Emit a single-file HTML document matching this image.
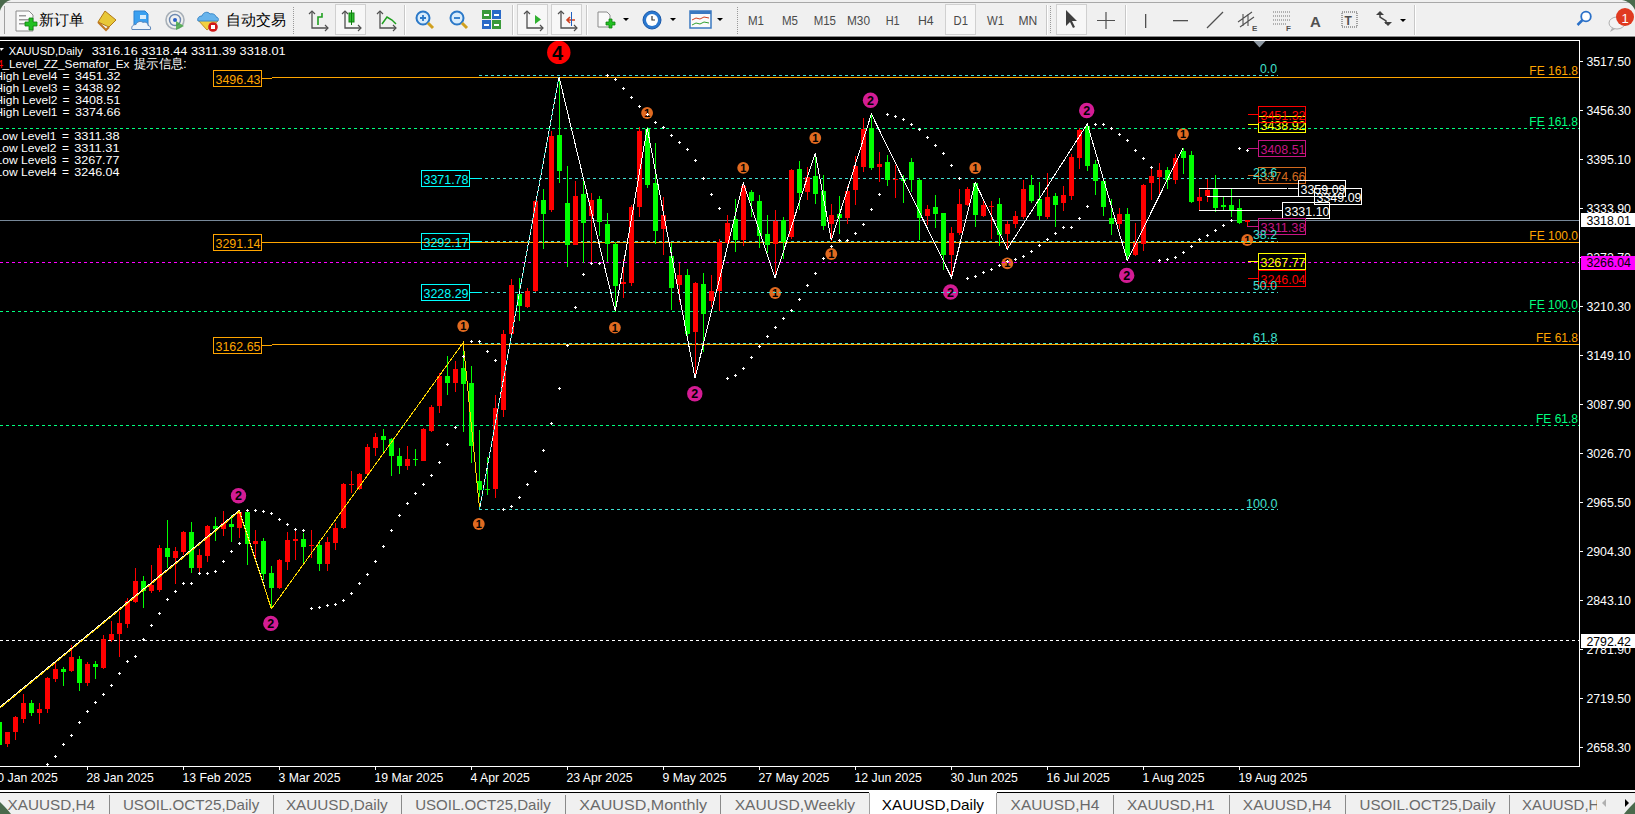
<!DOCTYPE html>
<html><head><meta charset="utf-8">
<style>
html,body{margin:0;padding:0;background:#000;}
body{width:1635px;height:814px;overflow:hidden;position:relative;font-family:"Liberation Sans",sans-serif;}
svg{position:absolute;left:0;top:0;}
text{font-family:"Liberation Sans",sans-serif;}
</style></head><body>
<svg width="1635" height="814" viewBox="0 0 1635 814">
<defs>
<pattern id="grip" width="3" height="2" patternUnits="userSpaceOnUse"><rect width="1" height="1" fill="#9a9a9a"/><rect x="2" y="1" width="1" height="1" fill="#9a9a9a"/></pattern>
</defs>
<rect x="0" y="0" width="1635" height="814" fill="#000"/>
<rect x="0" y="0" width="1635" height="36" fill="#f0f0f0"/>
<rect x="0" y="2" width="1635" height="1" fill="#a8a8a8"/>
<rect x="0" y="35" width="1635" height="1" fill="#f6f6f6"/>
<rect x="0" y="36" width="1635" height="1" fill="#8c8c8c"/>
<path d="M0 0h11c-5 1-9 5-11 11z" fill="#4a6a4c"/>
<path d="M1635 0h-13c6 1 11 5 13 10z" fill="#4a6a4c"/>
<rect x="4" y="6" width="1" height="28" fill="#a0a0a0"/>
<path d="M16 11h13l4 4v16h-17z" fill="#fafafa" stroke="#8a8a8a"/>
<rect x="19" y="15" width="7" height="1.5" fill="#999"/><rect x="19" y="19" width="10" height="1.5" fill="#999"/><rect x="19" y="23" width="10" height="1.5" fill="#999"/>
<path d="M25 22h4v-4h4v4h4v4h-4v4h-4v-4h-4z" fill="#22c022" stroke="#108010" stroke-width="0.8"/>
<text x="39" y="24.6" font-size="15.3" fill="#000">新订单</text>
<path d="M98 22l7-11 11 9-7 7z" fill="#e8c838" stroke="#b07818"/><path d="M98 22l8 8 3-3" fill="none" stroke="#c07820" stroke-width="2"/>
<path d="M134 11h11l3 3v12h-14z" fill="#3aa0f0" stroke="#2a80d0"/><rect x="140" y="15" width="6" height="4" fill="#d8ecfb"/><path d="M132 29.5c-1-3 1-5 4-5c1-3 5-4 7-2c2-1 5 0 5 3c2 0 3 2 2.5 4z" fill="#eef4fa" stroke="#5a84b8"/>
<circle cx="175" cy="20" r="9" fill="none" stroke="#a8b0b8" stroke-width="1.6"/><circle cx="175" cy="20" r="5.5" fill="none" stroke="#6c88b0" stroke-width="1.4"/><circle cx="175" cy="20" r="2" fill="#2a60c8"/><path d="M176 21l0 9l8-4z" fill="#48a848" opacity="0.85"/>
<path d="M198 20l9 10 11-9z" fill="#f2d040" stroke="#c09020"/><path d="M198 21c-1-3 1-5 4-5c1-4 6-5 8-2c3-1 6 1 6 3c2 0 3 2 2 4z" fill="#68b4ec" stroke="#3a88c8"/><circle cx="213" cy="27" r="4.8" fill="#d01818"/><rect x="211" y="25" width="4" height="4" fill="#fff"/>
<text x="225.5" y="24.6" font-size="15.3" fill="#000">自动交易</text>
<rect x="292" y="6" width="2" height="28" fill="url(#grip)"/>
<path d="M312 11v17h16" fill="none" stroke="#505050" stroke-width="1.3"/><path d="M309 14l3-3 3 3M325 25l3 3-3 3" fill="none" stroke="#505050" stroke-width="1.2"/>
<path d="M318 25v-8h4v-4" fill="none" stroke="#20a020" stroke-width="1.6"/>
<rect x="335.5" y="4.5" width="30" height="30" fill="#f7f7f7" stroke="#d0d0d0"/>
<path d="M345 11v17h16" fill="none" stroke="#505050" stroke-width="1.3"/><path d="M342 14l3-3 3 3M358 25l3 3-3 3" fill="none" stroke="#505050" stroke-width="1.2"/>
<rect x="349" y="13" width="5" height="9" fill="#30c030" stroke="#108010"/><rect x="351" y="10" width="1" height="15" fill="#108010"/>
<path d="M380 11v17h16" fill="none" stroke="#505050" stroke-width="1.3"/><path d="M377 14l3-3 3 3M393 25l3 3-3 3" fill="none" stroke="#505050" stroke-width="1.2"/>
<path d="M382 24l5-7 5 3 4 4" fill="none" stroke="#20a020" stroke-width="1.5"/>
<rect x="404" y="5" width="1" height="30" fill="#c8c8c8"/><rect x="405" y="5" width="1" height="30" fill="#ffffff"/>
<circle cx="423" cy="18" r="6.5" fill="#d8ecfc" stroke="#2a78c8" stroke-width="2"/><path d="M428 23l5 5" stroke="#d0a020" stroke-width="3"/><path d="M420 18h6M423 15v6" stroke="#2a78c8" stroke-width="1.8"/>
<circle cx="457" cy="18" r="6.5" fill="#d8ecfc" stroke="#2a78c8" stroke-width="2"/><path d="M462 23l5 5" stroke="#d0a020" stroke-width="3"/><path d="M454 18h6" stroke="#2a78c8" stroke-width="1.8"/>
<rect x="482" y="10" width="9" height="9" fill="#3a9a3a"/><rect x="492" y="10" width="9" height="9" fill="#2a6ac8"/><rect x="482" y="20" width="9" height="9" fill="#2a6ac8"/><rect x="492" y="20" width="9" height="9" fill="#3a9a3a"/>
<rect x="484" y="14" width="5" height="2" fill="#fff"/><rect x="494" y="14" width="5" height="2" fill="#fff"/><rect x="484" y="24" width="5" height="2" fill="#fff"/><rect x="494" y="24" width="5" height="2" fill="#fff"/>
<rect x="512" y="5" width="1" height="30" fill="#c8c8c8"/><rect x="513" y="5" width="1" height="30" fill="#ffffff"/>
<rect x="517.5" y="4.5" width="30" height="30" fill="#f7f7f7" stroke="#d0d0d0"/>
<path d="M527 11v17h16" fill="none" stroke="#505050" stroke-width="1.3"/><path d="M524 14l3-3 3 3M540 25l3 3-3 3" fill="none" stroke="#505050" stroke-width="1.2"/>
<path d="M535 15v9l6-4.5z" fill="#30b030"/>
<rect x="551.5" y="4.5" width="30" height="30" fill="#f7f7f7" stroke="#d0d0d0"/>
<path d="M561 11v17h16" fill="none" stroke="#505050" stroke-width="1.3"/><path d="M558 14l3-3 3 3M574 25l3 3-3 3" fill="none" stroke="#505050" stroke-width="1.2"/>
<path d="M567 20h8M570 17l-3 3 3 3" fill="none" stroke="#d04020" stroke-width="1.6"/><rect x="571" y="12" width="1" height="14" fill="#2060c0"/>
<rect x="586" y="5" width="1" height="30" fill="#c8c8c8"/><rect x="587" y="5" width="1" height="30" fill="#ffffff"/>
<path d="M598 12h9l3 3v12h-12z" fill="#fafafa" stroke="#8a8a8a"/><path d="M606 22h3v-3h3v3h3v3h-3v3h-3v-3h-3z" fill="#22c022" stroke="#108010" stroke-width="0.8"/>
<path d="M623 18h6l-3 3z" fill="#000"/>
<circle cx="652" cy="20" r="9" fill="#2a78d0" stroke="#1a58a8"/><circle cx="652" cy="20" r="6" fill="#fff"/><path d="M652 16v4h3" fill="none" stroke="#333" stroke-width="1.2"/>
<path d="M670 18h6l-3 3z" fill="#000"/>
<rect x="690" y="11" width="21" height="17" fill="#fafafa" stroke="#3a78c0" stroke-width="1.5"/><rect x="690" y="11" width="21" height="3" fill="#3a78c0"/><path d="M692 20l4-2 4 1 4-2 5 1" fill="none" stroke="#d04020"/><path d="M692 25l4-2 4 1 4-2 5 1" fill="none" stroke="#30a030"/>
<path d="M717 18h6l-3 3z" fill="#000"/>
<rect x="736" y="6" width="2" height="28" fill="url(#grip)"/>
<rect x="945.5" y="4.5" width="30" height="30" fill="#f7f7f7" stroke="#d0d0d0"/>
<text x="748" y="25.3" font-size="12" fill="#4a4a4a" textLength="16" lengthAdjust="spacingAndGlyphs">M1</text>
<text x="782" y="25.3" font-size="12" fill="#4a4a4a" textLength="16" lengthAdjust="spacingAndGlyphs">M5</text>
<text x="813.7" y="25.3" font-size="12" fill="#4a4a4a" textLength="22.3" lengthAdjust="spacingAndGlyphs">M15</text>
<text x="847" y="25.3" font-size="12" fill="#4a4a4a" textLength="23" lengthAdjust="spacingAndGlyphs">M30</text>
<text x="885.7" y="25.3" font-size="12" fill="#4a4a4a" textLength="14" lengthAdjust="spacingAndGlyphs">H1</text>
<text x="918" y="25.3" font-size="12" fill="#4a4a4a" textLength="15.7" lengthAdjust="spacingAndGlyphs">H4</text>
<text x="953.6" y="25.3" font-size="12" fill="#4a4a4a" textLength="14.4" lengthAdjust="spacingAndGlyphs">D1</text>
<text x="987" y="25.3" font-size="12" fill="#4a4a4a" textLength="17" lengthAdjust="spacingAndGlyphs">W1</text>
<text x="1018.5" y="25.3" font-size="12" fill="#4a4a4a" textLength="18.8" lengthAdjust="spacingAndGlyphs">MN</text>
<rect x="1046" y="5" width="1" height="30" fill="#c8c8c8"/><rect x="1047" y="5" width="1" height="30" fill="#ffffff"/>
<rect x="1050" y="6" width="2" height="28" fill="url(#grip)"/>
<rect x="1056.5" y="4.5" width="30" height="30" fill="#f7f7f7" stroke="#d0d0d0"/>
<path d="M1066 10v16l4-4 3 6 2-1-3-6h5z" fill="#404040"/>
<path d="M1097 20.5h18M1106 12v17" stroke="#505050" stroke-width="1.2"/>
<rect x="1125" y="5" width="1" height="30" fill="#c8c8c8"/><rect x="1126" y="5" width="1" height="30" fill="#ffffff"/>
<rect x="1145" y="14" width="1.3" height="14" fill="#505050"/>
<rect x="1173" y="20" width="15" height="1.3" fill="#505050"/>
<path d="M1207 28l16-16" stroke="#505050" stroke-width="1.3"/>
<path d="M1238 22l14-10M1240 27l14-10M1243 14v12M1248 14v12" stroke="#505050" stroke-width="1.1"/><text x="1252" y="31" font-size="8" font-weight="bold" fill="#505050">E</text>
<path d="M1273 12h18M1273 16h18M1273 20h18M1273 24h14" stroke="#707070" stroke-width="1" stroke-dasharray="1 1"/><text x="1286" y="31" font-size="8" font-weight="bold" fill="#505050">F</text>
<text x="1310" y="27" font-size="15" font-weight="bold" fill="#505050">A</text>
<rect x="1342" y="12" width="15" height="15" fill="none" stroke="#505050" stroke-dasharray="1 1"/><text x="1344.5" y="25" font-size="12" font-weight="bold" fill="#505050">T</text>
<path d="M1376 15l4-4 4 4zM1384 22l4 4 4-4z" fill="#404040"/><path d="M1380 13v4l6 4v3" stroke="#404040" stroke-width="1.5" fill="none"/>
<path d="M1400 19h6l-3 3z" fill="#000"/>
<rect x="1414" y="5" width="1" height="30" fill="#c8c8c8"/><rect x="1415" y="5" width="1" height="30" fill="#ffffff"/>
<circle cx="1586" cy="16.5" r="4.8" fill="#ffffff" stroke="#2a70c8" stroke-width="1.8"/><path d="M1582.5 20l-5 5" stroke="#2a70c8" stroke-width="2.5"/>
<ellipse cx="1617" cy="23" rx="8" ry="6" fill="#f4f4f4" stroke="#b0b0b0"/><path d="M1612 28l-2 4 5-3z" fill="#b0b0b0"/>
<circle cx="1625" cy="17" r="9" fill="#e03a20"/><text x="1625" y="22.5" font-size="13" fill="#fff" text-anchor="middle">1</text>
<g shape-rendering="crispEdges">
</g>
<circle cx="463.2" cy="326" r="5.9" fill="#e06a20"/>
<text x="463.2" y="330" font-size="11" font-weight="bold" text-anchor="middle" fill="#000">1</text>
<circle cx="478.8" cy="524" r="5.9" fill="#e06a20"/>
<text x="478.8" y="528" font-size="11" font-weight="bold" text-anchor="middle" fill="#000">1</text>
<circle cx="647.1" cy="113" r="5.9" fill="#e06a20"/>
<text x="647.1" y="117" font-size="11" font-weight="bold" text-anchor="middle" fill="#000">1</text>
<circle cx="614.9" cy="327.6" r="5.9" fill="#e06a20"/>
<text x="614.9" y="331.6" font-size="11" font-weight="bold" text-anchor="middle" fill="#000">1</text>
<circle cx="743.2" cy="167.8" r="5.9" fill="#e06a20"/>
<text x="743.2" y="171.8" font-size="11" font-weight="bold" text-anchor="middle" fill="#000">1</text>
<circle cx="775.1" cy="293" r="5.9" fill="#e06a20"/>
<text x="775.1" y="297" font-size="11" font-weight="bold" text-anchor="middle" fill="#000">1</text>
<circle cx="815.3" cy="138" r="5.9" fill="#e06a20"/>
<text x="815.3" y="142" font-size="11" font-weight="bold" text-anchor="middle" fill="#000">1</text>
<circle cx="831.3" cy="254" r="5.9" fill="#e06a20"/>
<text x="831.3" y="258" font-size="11" font-weight="bold" text-anchor="middle" fill="#000">1</text>
<circle cx="975.3" cy="168" r="5.9" fill="#e06a20"/>
<text x="975.3" y="172" font-size="11" font-weight="bold" text-anchor="middle" fill="#000">1</text>
<circle cx="1007.3" cy="263.3" r="5.9" fill="#e06a20"/>
<text x="1007.3" y="267.3" font-size="11" font-weight="bold" text-anchor="middle" fill="#000">1</text>
<circle cx="1183" cy="134" r="5.9" fill="#e06a20"/>
<text x="1183" y="138" font-size="11" font-weight="bold" text-anchor="middle" fill="#000">1</text>
<circle cx="1247.2" cy="240" r="5.9" fill="#e06a20"/>
<text x="1247.2" y="244" font-size="11" font-weight="bold" text-anchor="middle" fill="#000">1</text>
<circle cx="238.5" cy="495.7" r="7.7" fill="#d41c94"/>
<text x="238.5" y="500.2" font-size="12.5" font-weight="bold" text-anchor="middle" fill="#000">2</text>
<circle cx="270.8" cy="623.4" r="7.7" fill="#d41c94"/>
<text x="270.8" y="627.9" font-size="12.5" font-weight="bold" text-anchor="middle" fill="#000">2</text>
<circle cx="694.8" cy="393.7" r="7.7" fill="#d41c94"/>
<text x="694.8" y="398.2" font-size="12.5" font-weight="bold" text-anchor="middle" fill="#000">2</text>
<circle cx="870.5" cy="100.3" r="7.7" fill="#d41c94"/>
<text x="870.5" y="104.8" font-size="12.5" font-weight="bold" text-anchor="middle" fill="#000">2</text>
<circle cx="950.6" cy="292" r="7.7" fill="#d41c94"/>
<text x="950.6" y="296.5" font-size="12.5" font-weight="bold" text-anchor="middle" fill="#000">2</text>
<circle cx="1086.7" cy="110.5" r="7.7" fill="#d41c94"/>
<text x="1086.7" y="115.0" font-size="12.5" font-weight="bold" text-anchor="middle" fill="#000">2</text>
<circle cx="1126.7" cy="275.4" r="7.7" fill="#d41c94"/>
<text x="1126.7" y="279.9" font-size="12.5" font-weight="bold" text-anchor="middle" fill="#000">2</text>
<circle cx="558.8" cy="52.4" r="11.7" fill="#ff0000"/>
<text x="557.6" y="59.8" font-size="20" font-weight="bold" text-anchor="middle" fill="#000">4</text>
<line x1="0" y1="128.5" x2="1579" y2="128.5" stroke="#00ff7f" stroke-width="1" stroke-dasharray="3 3"/>
<line x1="0" y1="311.5" x2="1579" y2="311.5" stroke="#00ff7f" stroke-width="1" stroke-dasharray="3 3"/>
<line x1="0" y1="425.5" x2="1579" y2="425.5" stroke="#00ff7f" stroke-width="1" stroke-dasharray="3 3"/>
<line x1="0" y1="262.5" x2="1579" y2="262.5" stroke="#ff00ff" stroke-width="1" stroke-dasharray="3 3"/>
<line x1="0" y1="640.5" x2="1579" y2="640.5" stroke="#ffffff" stroke-width="1" stroke-dasharray="3 3"/>
<rect x="0" y="220" width="1579" height="1" fill="#778899"/>
<rect x="262" y="78" width="10" height="1" fill="#ffa500"/>
<rect x="272" y="77" width="1307" height="1" fill="#ffa500"/>
<rect x="262" y="242" width="1317" height="1" fill="#ffa500"/>
<rect x="262" y="345" width="10" height="1" fill="#ffa500"/>
<rect x="272" y="344" width="1307" height="1" fill="#ffa500"/>
<line x1="479" y1="75.5" x2="1278" y2="75.5" stroke="#40e0d0" stroke-width="1" stroke-dasharray="3 3"/>
<line x1="479" y1="178.5" x2="1278" y2="178.5" stroke="#40e0d0" stroke-width="1" stroke-dasharray="3 3"/>
<line x1="479" y1="241.5" x2="1278" y2="241.5" stroke="#40e0d0" stroke-width="1" stroke-dasharray="3 3"/>
<line x1="479" y1="292.5" x2="1278" y2="292.5" stroke="#40e0d0" stroke-width="1" stroke-dasharray="3 3"/>
<line x1="479" y1="343.5" x2="1278" y2="343.5" stroke="#40e0d0" stroke-width="1" stroke-dasharray="3 3"/>
<line x1="479" y1="509.5" x2="1278" y2="509.5" stroke="#40e0d0" stroke-width="1" stroke-dasharray="3 3"/>
<rect x="470" y="178" width="12" height="1" fill="#00ffff"/>
<rect x="470" y="241" width="12" height="1" fill="#00ffff"/>
<rect x="470" y="292" width="12" height="1" fill="#00ffff"/>
<rect x="-1" y="716" width="1" height="36" fill="#00ff00"/>
<rect x="-3" y="722" width="5" height="23" fill="#00ff00"/>
<rect x="7" y="732" width="1" height="15" fill="#ff0000"/>
<rect x="5" y="732" width="5" height="12" fill="#ff0000"/>
<rect x="15" y="716" width="1" height="24" fill="#ff0000"/>
<rect x="13" y="717" width="5" height="15" fill="#ff0000"/>
<rect x="23" y="694" width="1" height="29" fill="#ff0000"/>
<rect x="21" y="703" width="5" height="16" fill="#ff0000"/>
<rect x="31" y="700" width="1" height="16" fill="#00ff00"/>
<rect x="29" y="703" width="5" height="10" fill="#00ff00"/>
<rect x="39" y="703" width="1" height="21" fill="#ff0000"/>
<rect x="37" y="709" width="5" height="4" fill="#ff0000"/>
<rect x="47" y="677" width="1" height="36" fill="#ff0000"/>
<rect x="45" y="678" width="5" height="31" fill="#ff0000"/>
<rect x="55" y="663" width="1" height="19" fill="#ff0000"/>
<rect x="53" y="669" width="5" height="10" fill="#ff0000"/>
<rect x="63" y="667" width="1" height="19" fill="#00ff00"/>
<rect x="61" y="669" width="5" height="3" fill="#00ff00"/>
<rect x="71" y="645" width="1" height="27" fill="#ff0000"/>
<rect x="69" y="657" width="5" height="14" fill="#ff0000"/>
<rect x="79" y="656" width="1" height="35" fill="#00ff00"/>
<rect x="77" y="659" width="5" height="24" fill="#00ff00"/>
<rect x="87" y="662" width="1" height="24" fill="#ff0000"/>
<rect x="85" y="664" width="5" height="19" fill="#ff0000"/>
<rect x="95" y="661" width="1" height="18" fill="#00ff00"/>
<rect x="93" y="664" width="5" height="3" fill="#00ff00"/>
<rect x="103" y="635" width="1" height="34" fill="#ff0000"/>
<rect x="101" y="639" width="5" height="29" fill="#ff0000"/>
<rect x="111" y="621" width="1" height="21" fill="#ff0000"/>
<rect x="109" y="634" width="5" height="6" fill="#ff0000"/>
<rect x="119" y="611" width="1" height="46" fill="#ff0000"/>
<rect x="117" y="623" width="5" height="11" fill="#ff0000"/>
<rect x="127" y="598" width="1" height="30" fill="#ff0000"/>
<rect x="125" y="601" width="5" height="23" fill="#ff0000"/>
<rect x="135" y="568" width="1" height="35" fill="#ff0000"/>
<rect x="133" y="581" width="5" height="21" fill="#ff0000"/>
<rect x="143" y="576" width="1" height="32" fill="#00ff00"/>
<rect x="141" y="581" width="5" height="10" fill="#00ff00"/>
<rect x="151" y="565" width="1" height="28" fill="#ff0000"/>
<rect x="149" y="585" width="5" height="6" fill="#ff0000"/>
<rect x="159" y="545" width="1" height="47" fill="#ff0000"/>
<rect x="157" y="548" width="5" height="42" fill="#ff0000"/>
<rect x="167" y="520" width="1" height="48" fill="#00ff00"/>
<rect x="165" y="548" width="5" height="9" fill="#00ff00"/>
<rect x="175" y="547" width="1" height="37" fill="#ff0000"/>
<rect x="173" y="551" width="5" height="7" fill="#ff0000"/>
<rect x="183" y="531" width="1" height="24" fill="#ff0000"/>
<rect x="181" y="532" width="5" height="20" fill="#ff0000"/>
<rect x="191" y="522" width="1" height="51" fill="#00ff00"/>
<rect x="189" y="532" width="5" height="36" fill="#00ff00"/>
<rect x="199" y="549" width="1" height="23" fill="#ff0000"/>
<rect x="197" y="555" width="5" height="13" fill="#ff0000"/>
<rect x="207" y="525" width="1" height="37" fill="#ff0000"/>
<rect x="205" y="526" width="5" height="30" fill="#ff0000"/>
<rect x="215" y="517" width="1" height="24" fill="#00ff00"/>
<rect x="213" y="526" width="5" height="3" fill="#00ff00"/>
<rect x="223" y="511" width="1" height="25" fill="#ff0000"/>
<rect x="221" y="523" width="5" height="6" fill="#ff0000"/>
<rect x="231" y="515" width="1" height="27" fill="#00ff00"/>
<rect x="229" y="524" width="5" height="3" fill="#00ff00"/>
<rect x="239" y="511" width="1" height="27" fill="#ff0000"/>
<rect x="237" y="512" width="5" height="16" fill="#ff0000"/>
<rect x="247" y="510" width="1" height="55" fill="#00ff00"/>
<rect x="245" y="512" width="5" height="32" fill="#00ff00"/>
<rect x="255" y="530" width="1" height="28" fill="#ff0000"/>
<rect x="253" y="541" width="5" height="3" fill="#ff0000"/>
<rect x="263" y="538" width="1" height="42" fill="#00ff00"/>
<rect x="261" y="541" width="5" height="33" fill="#00ff00"/>
<rect x="271" y="566" width="1" height="43" fill="#00ff00"/>
<rect x="269" y="573" width="5" height="15" fill="#00ff00"/>
<rect x="279" y="559" width="1" height="30" fill="#ff0000"/>
<rect x="277" y="560" width="5" height="28" fill="#ff0000"/>
<rect x="287" y="532" width="1" height="38" fill="#ff0000"/>
<rect x="285" y="540" width="5" height="22" fill="#ff0000"/>
<rect x="295" y="530" width="1" height="30" fill="#ff0000"/>
<rect x="293" y="539" width="5" height="2" fill="#ff0000"/>
<rect x="303" y="533" width="1" height="30" fill="#00ff00"/>
<rect x="301" y="539" width="5" height="8" fill="#00ff00"/>
<rect x="311" y="530" width="1" height="28" fill="#ff0000"/>
<rect x="309" y="545" width="5" height="1" fill="#ff0000"/>
<rect x="319" y="540" width="1" height="31" fill="#00ff00"/>
<rect x="317" y="545" width="5" height="19" fill="#00ff00"/>
<rect x="327" y="537" width="1" height="34" fill="#ff0000"/>
<rect x="325" y="542" width="5" height="22" fill="#ff0000"/>
<rect x="335" y="523" width="1" height="27" fill="#ff0000"/>
<rect x="333" y="528" width="5" height="15" fill="#ff0000"/>
<rect x="343" y="483" width="1" height="46" fill="#ff0000"/>
<rect x="341" y="484" width="5" height="44" fill="#ff0000"/>
<rect x="351" y="471" width="1" height="22" fill="#ff0000"/>
<rect x="349" y="484" width="5" height="1" fill="#ff0000"/>
<rect x="359" y="473" width="1" height="17" fill="#ff0000"/>
<rect x="357" y="474" width="5" height="15" fill="#ff0000"/>
<rect x="367" y="444" width="1" height="31" fill="#ff0000"/>
<rect x="365" y="447" width="5" height="27" fill="#ff0000"/>
<rect x="375" y="433" width="1" height="23" fill="#ff0000"/>
<rect x="373" y="437" width="5" height="11" fill="#ff0000"/>
<rect x="383" y="429" width="1" height="25" fill="#00ff00"/>
<rect x="381" y="436" width="5" height="4" fill="#00ff00"/>
<rect x="391" y="438" width="1" height="38" fill="#00ff00"/>
<rect x="389" y="439" width="5" height="17" fill="#00ff00"/>
<rect x="399" y="448" width="1" height="26" fill="#00ff00"/>
<rect x="397" y="456" width="5" height="10" fill="#00ff00"/>
<rect x="407" y="446" width="1" height="24" fill="#ff0000"/>
<rect x="405" y="459" width="5" height="7" fill="#ff0000"/>
<rect x="415" y="449" width="1" height="17" fill="#00ff00"/>
<rect x="413" y="459" width="5" height="1" fill="#00ff00"/>
<rect x="423" y="428" width="1" height="33" fill="#ff0000"/>
<rect x="421" y="429" width="5" height="32" fill="#ff0000"/>
<rect x="431" y="405" width="1" height="27" fill="#ff0000"/>
<rect x="429" y="407" width="5" height="24" fill="#ff0000"/>
<rect x="439" y="373" width="1" height="40" fill="#ff0000"/>
<rect x="437" y="376" width="5" height="30" fill="#ff0000"/>
<rect x="447" y="356" width="1" height="39" fill="#00ff00"/>
<rect x="445" y="376" width="5" height="7" fill="#00ff00"/>
<rect x="455" y="361" width="1" height="31" fill="#ff0000"/>
<rect x="453" y="369" width="5" height="14" fill="#ff0000"/>
<rect x="463" y="341" width="1" height="91" fill="#00ff00"/>
<rect x="461" y="368" width="5" height="16" fill="#00ff00"/>
<rect x="471" y="366" width="1" height="97" fill="#00ff00"/>
<rect x="469" y="383" width="5" height="63" fill="#00ff00"/>
<rect x="479" y="430" width="1" height="67" fill="#00ff00"/>
<rect x="477" y="481" width="5" height="9" fill="#00ff00"/>
<rect x="487" y="457" width="1" height="38" fill="#00ff00"/>
<rect x="485" y="489" width="5" height="1" fill="#00ff00"/>
<rect x="495" y="395" width="1" height="103" fill="#ff0000"/>
<rect x="493" y="408" width="5" height="81" fill="#ff0000"/>
<rect x="503" y="330" width="1" height="87" fill="#ff0000"/>
<rect x="501" y="334" width="5" height="76" fill="#ff0000"/>
<rect x="511" y="279" width="1" height="56" fill="#ff0000"/>
<rect x="509" y="285" width="5" height="49" fill="#ff0000"/>
<rect x="519" y="278" width="1" height="43" fill="#00ff00"/>
<rect x="517" y="294" width="5" height="12" fill="#00ff00"/>
<rect x="527" y="288" width="1" height="20" fill="#ff0000"/>
<rect x="525" y="291" width="5" height="16" fill="#ff0000"/>
<rect x="535" y="200" width="1" height="92" fill="#ff0000"/>
<rect x="533" y="201" width="5" height="90" fill="#ff0000"/>
<rect x="543" y="189" width="1" height="60" fill="#00ff00"/>
<rect x="541" y="200" width="5" height="14" fill="#00ff00"/>
<rect x="551" y="131" width="1" height="81" fill="#ff0000"/>
<rect x="549" y="136" width="5" height="74" fill="#ff0000"/>
<rect x="559" y="77" width="1" height="106" fill="#00ff00"/>
<rect x="557" y="135" width="5" height="36" fill="#00ff00"/>
<rect x="567" y="166" width="1" height="101" fill="#00ff00"/>
<rect x="565" y="203" width="5" height="42" fill="#00ff00"/>
<rect x="575" y="181" width="1" height="64" fill="#ff0000"/>
<rect x="573" y="196" width="5" height="49" fill="#ff0000"/>
<rect x="583" y="179" width="1" height="84" fill="#00ff00"/>
<rect x="581" y="194" width="5" height="29" fill="#00ff00"/>
<rect x="591" y="193" width="1" height="69" fill="#ff0000"/>
<rect x="589" y="200" width="5" height="16" fill="#ff0000"/>
<rect x="599" y="196" width="1" height="40" fill="#00ff00"/>
<rect x="597" y="199" width="5" height="23" fill="#00ff00"/>
<rect x="607" y="213" width="1" height="49" fill="#00ff00"/>
<rect x="605" y="224" width="5" height="20" fill="#00ff00"/>
<rect x="615" y="242" width="1" height="70" fill="#00ff00"/>
<rect x="613" y="244" width="5" height="42" fill="#00ff00"/>
<rect x="623" y="259" width="1" height="39" fill="#ff0000"/>
<rect x="621" y="282" width="5" height="2" fill="#ff0000"/>
<rect x="631" y="205" width="1" height="81" fill="#ff0000"/>
<rect x="629" y="207" width="5" height="76" fill="#ff0000"/>
<rect x="639" y="127" width="1" height="90" fill="#ff0000"/>
<rect x="637" y="131" width="5" height="76" fill="#ff0000"/>
<rect x="647" y="127" width="1" height="61" fill="#00ff00"/>
<rect x="645" y="129" width="5" height="56" fill="#00ff00"/>
<rect x="655" y="143" width="1" height="101" fill="#00ff00"/>
<rect x="653" y="183" width="5" height="48" fill="#00ff00"/>
<rect x="663" y="197" width="1" height="58" fill="#ff0000"/>
<rect x="661" y="215" width="5" height="14" fill="#ff0000"/>
<rect x="671" y="243" width="1" height="67" fill="#00ff00"/>
<rect x="669" y="256" width="5" height="32" fill="#00ff00"/>
<rect x="679" y="263" width="1" height="39" fill="#ff0000"/>
<rect x="677" y="275" width="5" height="10" fill="#ff0000"/>
<rect x="687" y="269" width="1" height="71" fill="#00ff00"/>
<rect x="685" y="275" width="5" height="59" fill="#00ff00"/>
<rect x="695" y="282" width="1" height="96" fill="#ff0000"/>
<rect x="693" y="283" width="5" height="49" fill="#ff0000"/>
<rect x="703" y="273" width="1" height="79" fill="#00ff00"/>
<rect x="701" y="284" width="5" height="30" fill="#00ff00"/>
<rect x="711" y="275" width="1" height="32" fill="#ff0000"/>
<rect x="709" y="291" width="5" height="10" fill="#ff0000"/>
<rect x="719" y="239" width="1" height="72" fill="#ff0000"/>
<rect x="717" y="242" width="5" height="49" fill="#ff0000"/>
<rect x="727" y="215" width="1" height="29" fill="#ff0000"/>
<rect x="725" y="223" width="5" height="20" fill="#ff0000"/>
<rect x="735" y="199" width="1" height="53" fill="#00ff00"/>
<rect x="733" y="219" width="5" height="21" fill="#00ff00"/>
<rect x="743" y="183" width="1" height="63" fill="#ff0000"/>
<rect x="741" y="186" width="5" height="54" fill="#ff0000"/>
<rect x="751" y="190" width="1" height="27" fill="#00ff00"/>
<rect x="749" y="192" width="5" height="9" fill="#00ff00"/>
<rect x="759" y="195" width="1" height="53" fill="#00ff00"/>
<rect x="757" y="201" width="5" height="35" fill="#00ff00"/>
<rect x="767" y="215" width="1" height="38" fill="#00ff00"/>
<rect x="765" y="234" width="5" height="11" fill="#00ff00"/>
<rect x="775" y="210" width="1" height="68" fill="#ff0000"/>
<rect x="773" y="221" width="5" height="23" fill="#ff0000"/>
<rect x="783" y="217" width="1" height="42" fill="#00ff00"/>
<rect x="781" y="220" width="5" height="22" fill="#00ff00"/>
<rect x="791" y="169" width="1" height="70" fill="#ff0000"/>
<rect x="789" y="170" width="5" height="67" fill="#ff0000"/>
<rect x="799" y="161" width="1" height="49" fill="#00ff00"/>
<rect x="797" y="169" width="5" height="24" fill="#00ff00"/>
<rect x="807" y="167" width="1" height="33" fill="#ff0000"/>
<rect x="805" y="177" width="5" height="15" fill="#ff0000"/>
<rect x="815" y="153" width="1" height="51" fill="#00ff00"/>
<rect x="813" y="176" width="5" height="18" fill="#00ff00"/>
<rect x="823" y="175" width="1" height="55" fill="#00ff00"/>
<rect x="821" y="191" width="5" height="35" fill="#00ff00"/>
<rect x="831" y="204" width="1" height="37" fill="#ff0000"/>
<rect x="829" y="215" width="5" height="9" fill="#ff0000"/>
<rect x="839" y="196" width="1" height="38" fill="#00ff00"/>
<rect x="837" y="214" width="5" height="4" fill="#00ff00"/>
<rect x="847" y="186" width="1" height="38" fill="#ff0000"/>
<rect x="845" y="191" width="5" height="27" fill="#ff0000"/>
<rect x="855" y="156" width="1" height="49" fill="#ff0000"/>
<rect x="853" y="166" width="5" height="24" fill="#ff0000"/>
<rect x="863" y="118" width="1" height="54" fill="#ff0000"/>
<rect x="861" y="129" width="5" height="38" fill="#ff0000"/>
<rect x="871" y="114" width="1" height="56" fill="#00ff00"/>
<rect x="869" y="128" width="5" height="40" fill="#00ff00"/>
<rect x="879" y="152" width="1" height="30" fill="#ff0000"/>
<rect x="877" y="164" width="5" height="3" fill="#ff0000"/>
<rect x="887" y="155" width="1" height="31" fill="#00ff00"/>
<rect x="885" y="162" width="5" height="18" fill="#00ff00"/>
<rect x="895" y="165" width="1" height="33" fill="#ff0000"/>
<rect x="893" y="179" width="5" height="1" fill="#ff0000"/>
<rect x="903" y="175" width="1" height="28" fill="#00ff00"/>
<rect x="901" y="179" width="5" height="2" fill="#00ff00"/>
<rect x="911" y="158" width="1" height="34" fill="#00ff00"/>
<rect x="909" y="162" width="5" height="18" fill="#00ff00"/>
<rect x="919" y="178" width="1" height="62" fill="#00ff00"/>
<rect x="917" y="180" width="5" height="38" fill="#00ff00"/>
<rect x="927" y="205" width="1" height="20" fill="#ff0000"/>
<rect x="925" y="209" width="5" height="7" fill="#ff0000"/>
<rect x="935" y="195" width="1" height="33" fill="#00ff00"/>
<rect x="933" y="207" width="5" height="7" fill="#00ff00"/>
<rect x="943" y="213" width="1" height="57" fill="#00ff00"/>
<rect x="941" y="213" width="5" height="42" fill="#00ff00"/>
<rect x="951" y="227" width="1" height="51" fill="#ff0000"/>
<rect x="949" y="233" width="5" height="22" fill="#ff0000"/>
<rect x="959" y="189" width="1" height="46" fill="#ff0000"/>
<rect x="957" y="204" width="5" height="29" fill="#ff0000"/>
<rect x="967" y="187" width="1" height="19" fill="#ff0000"/>
<rect x="965" y="189" width="5" height="16" fill="#ff0000"/>
<rect x="975" y="182" width="1" height="45" fill="#00ff00"/>
<rect x="973" y="183" width="5" height="32" fill="#00ff00"/>
<rect x="983" y="201" width="1" height="16" fill="#ff0000"/>
<rect x="981" y="205" width="5" height="11" fill="#ff0000"/>
<rect x="991" y="201" width="1" height="38" fill="#ff0000"/>
<rect x="989" y="206" width="5" height="1" fill="#ff0000"/>
<rect x="999" y="198" width="1" height="48" fill="#00ff00"/>
<rect x="997" y="204" width="5" height="31" fill="#00ff00"/>
<rect x="1007" y="221" width="1" height="28" fill="#ff0000"/>
<rect x="1005" y="224" width="5" height="10" fill="#ff0000"/>
<rect x="1015" y="211" width="1" height="17" fill="#ff0000"/>
<rect x="1013" y="216" width="5" height="8" fill="#ff0000"/>
<rect x="1023" y="180" width="1" height="39" fill="#ff0000"/>
<rect x="1021" y="189" width="5" height="28" fill="#ff0000"/>
<rect x="1031" y="175" width="1" height="28" fill="#00ff00"/>
<rect x="1029" y="185" width="5" height="16" fill="#00ff00"/>
<rect x="1039" y="182" width="1" height="38" fill="#00ff00"/>
<rect x="1037" y="199" width="5" height="17" fill="#00ff00"/>
<rect x="1047" y="173" width="1" height="46" fill="#ff0000"/>
<rect x="1045" y="197" width="5" height="20" fill="#ff0000"/>
<rect x="1055" y="193" width="1" height="34" fill="#00ff00"/>
<rect x="1053" y="196" width="5" height="9" fill="#00ff00"/>
<rect x="1063" y="186" width="1" height="25" fill="#ff0000"/>
<rect x="1061" y="195" width="5" height="8" fill="#ff0000"/>
<rect x="1071" y="154" width="1" height="46" fill="#ff0000"/>
<rect x="1069" y="157" width="5" height="39" fill="#ff0000"/>
<rect x="1079" y="128" width="1" height="41" fill="#ff0000"/>
<rect x="1077" y="130" width="5" height="28" fill="#ff0000"/>
<rect x="1087" y="124" width="1" height="47" fill="#00ff00"/>
<rect x="1085" y="126" width="5" height="40" fill="#00ff00"/>
<rect x="1095" y="160" width="1" height="35" fill="#00ff00"/>
<rect x="1093" y="164" width="5" height="17" fill="#00ff00"/>
<rect x="1103" y="180" width="1" height="36" fill="#00ff00"/>
<rect x="1101" y="181" width="5" height="26" fill="#00ff00"/>
<rect x="1111" y="199" width="1" height="36" fill="#00ff00"/>
<rect x="1109" y="218" width="5" height="6" fill="#00ff00"/>
<rect x="1119" y="208" width="1" height="21" fill="#ff0000"/>
<rect x="1117" y="214" width="5" height="10" fill="#ff0000"/>
<rect x="1127" y="208" width="1" height="51" fill="#00ff00"/>
<rect x="1125" y="214" width="5" height="42" fill="#00ff00"/>
<rect x="1135" y="223" width="1" height="33" fill="#ff0000"/>
<rect x="1133" y="243" width="5" height="12" fill="#ff0000"/>
<rect x="1143" y="184" width="1" height="67" fill="#ff0000"/>
<rect x="1141" y="185" width="5" height="59" fill="#ff0000"/>
<rect x="1151" y="168" width="1" height="32" fill="#ff0000"/>
<rect x="1149" y="176" width="5" height="7" fill="#ff0000"/>
<rect x="1159" y="163" width="1" height="31" fill="#ff0000"/>
<rect x="1157" y="170" width="5" height="7" fill="#ff0000"/>
<rect x="1167" y="167" width="1" height="22" fill="#00ff00"/>
<rect x="1165" y="170" width="5" height="10" fill="#00ff00"/>
<rect x="1175" y="154" width="1" height="30" fill="#ff0000"/>
<rect x="1173" y="158" width="5" height="22" fill="#ff0000"/>
<rect x="1183" y="148" width="1" height="26" fill="#00ff00"/>
<rect x="1181" y="151" width="5" height="7" fill="#00ff00"/>
<rect x="1191" y="151" width="1" height="52" fill="#00ff00"/>
<rect x="1189" y="155" width="5" height="47" fill="#00ff00"/>
<rect x="1199" y="189" width="1" height="21" fill="#ff0000"/>
<rect x="1197" y="197" width="5" height="4" fill="#ff0000"/>
<rect x="1207" y="179" width="1" height="23" fill="#ff0000"/>
<rect x="1205" y="190" width="5" height="6" fill="#ff0000"/>
<rect x="1215" y="175" width="1" height="37" fill="#00ff00"/>
<rect x="1213" y="189" width="5" height="19" fill="#00ff00"/>
<rect x="1223" y="197" width="1" height="13" fill="#00ff00"/>
<rect x="1221" y="205" width="5" height="2" fill="#00ff00"/>
<rect x="1231" y="189" width="1" height="28" fill="#00ff00"/>
<rect x="1229" y="205" width="5" height="5" fill="#00ff00"/>
<rect x="1239" y="199" width="1" height="25" fill="#00ff00"/>
<rect x="1237" y="208" width="5" height="15" fill="#00ff00"/>
<rect x="1247" y="220" width="1" height="2" fill="#ff0000"/>
<rect x="1245" y="220" width="5" height="2" fill="#ff0000"/>
<polyline fill="none" shape-rendering="crispEdges" stroke="#ffffff" stroke-width="1" points="0,707 239.3,510.4 271.4,608 "/>
<polyline fill="none" shape-rendering="crispEdges" stroke="#ffd700" stroke-width="1" points="0,708 239.3,511.4 271.4,608.7 463.2,342.6 479.6,508.9"/>
<polyline fill="none" shape-rendering="crispEdges" stroke="#ffffff" stroke-width="1" points="479.6,508.9 559,76.8 615.3,311.4 647.2,128 695,377.8 743.2,183 775,277.6 815.2,153 831.3,240 871.4,114 951.5,277.6 975.2,182.6 1007.3,249 1087.3,124 1127.3,260.5 1183,148"/>
<line x1="479.6" y1="508.9" x2="559" y2="76.8" shape-rendering="crispEdges" stroke="#40e0d0" stroke-width="1" stroke-dasharray="3 3"/>
<rect x="1247" y="222" width="1" height="4" fill="#ff0000"/>
<rect x="1247" y="226" width="11" height="1" fill="#c71585"/>
<rect x="1199" y="188" width="88" height="1" fill="#ffffff"/>
<rect x="1288" y="188" width="10" height="1" fill="#ffffff"/>
<rect x="1207" y="196" width="107" height="1" fill="#ffffff"/>
<rect x="1199" y="210" width="72" height="1" fill="#ffffff"/>
<rect x="1272" y="210" width="10" height="1" fill="#ffffff"/>
<path d="M46 764h3v1h-3zM47 763h1v3h-1z" fill="#ffffff"/>
<path d="M54 756h3v1h-3zM55 755h1v3h-1z" fill="#ffffff"/>
<path d="M62 744h3v1h-3zM63 743h1v3h-1z" fill="#ffffff"/>
<path d="M70 735h3v1h-3zM71 734h1v3h-1z" fill="#ffffff"/>
<path d="M78 722h3v1h-3zM79 721h1v3h-1z" fill="#ffffff"/>
<path d="M86 711h3v1h-3zM87 710h1v3h-1z" fill="#ffffff"/>
<path d="M94 702h3v1h-3zM95 701h1v3h-1z" fill="#ffffff"/>
<path d="M102 694h3v1h-3zM103 693h1v3h-1z" fill="#ffffff"/>
<path d="M110 685h3v1h-3zM111 684h1v3h-1z" fill="#ffffff"/>
<path d="M118 673h3v1h-3zM119 672h1v3h-1z" fill="#ffffff"/>
<path d="M126 661h3v1h-3zM127 660h1v3h-1z" fill="#ffffff"/>
<path d="M134 656h3v1h-3zM135 655h1v3h-1z" fill="#ffffff"/>
<path d="M142 639h3v1h-3zM143 638h1v3h-1z" fill="#ffffff"/>
<path d="M150 625h3v1h-3zM151 624h1v3h-1z" fill="#ffffff"/>
<path d="M158 613h3v1h-3zM159 612h1v3h-1z" fill="#ffffff"/>
<path d="M166 599h3v1h-3zM167 598h1v3h-1z" fill="#ffffff"/>
<path d="M174 591h3v1h-3zM175 590h1v3h-1z" fill="#ffffff"/>
<path d="M182 583h3v1h-3zM183 582h1v3h-1z" fill="#ffffff"/>
<path d="M190 583h3v1h-3zM191 582h1v3h-1z" fill="#ffffff"/>
<path d="M198 573h3v1h-3zM199 572h1v3h-1z" fill="#ffffff"/>
<path d="M206 573h3v1h-3zM207 572h1v3h-1z" fill="#ffffff"/>
<path d="M214 571h3v1h-3zM215 570h1v3h-1z" fill="#ffffff"/>
<path d="M222 561h3v1h-3zM223 560h1v3h-1z" fill="#ffffff"/>
<path d="M230 551h3v1h-3zM231 550h1v3h-1z" fill="#ffffff"/>
<path d="M238 543h3v1h-3zM239 542h1v3h-1z" fill="#ffffff"/>
<path d="M246 510h3v1h-3zM247 509h1v3h-1z" fill="#ffffff"/>
<path d="M254 510h3v1h-3zM255 509h1v3h-1z" fill="#ffffff"/>
<path d="M262 511h3v1h-3zM263 510h1v3h-1z" fill="#ffffff"/>
<path d="M270 513h3v1h-3zM271 512h1v3h-1z" fill="#ffffff"/>
<path d="M278 519h3v1h-3zM279 518h1v3h-1z" fill="#ffffff"/>
<path d="M286 524h3v1h-3zM287 523h1v3h-1z" fill="#ffffff"/>
<path d="M294 529h3v1h-3zM295 528h1v3h-1z" fill="#ffffff"/>
<path d="M302 530h3v1h-3zM303 529h1v3h-1z" fill="#ffffff"/>
<path d="M310 608h3v1h-3zM311 607h1v3h-1z" fill="#ffffff"/>
<path d="M318 607h3v1h-3zM319 606h1v3h-1z" fill="#ffffff"/>
<path d="M326 605h3v1h-3zM327 604h1v3h-1z" fill="#ffffff"/>
<path d="M334 604h3v1h-3zM335 603h1v3h-1z" fill="#ffffff"/>
<path d="M342 600h3v1h-3zM343 599h1v3h-1z" fill="#ffffff"/>
<path d="M350 593h3v1h-3zM351 592h1v3h-1z" fill="#ffffff"/>
<path d="M358 583h3v1h-3zM359 582h1v3h-1z" fill="#ffffff"/>
<path d="M366 574h3v1h-3zM367 573h1v3h-1z" fill="#ffffff"/>
<path d="M374 561h3v1h-3zM375 560h1v3h-1z" fill="#ffffff"/>
<path d="M382 546h3v1h-3zM383 545h1v3h-1z" fill="#ffffff"/>
<path d="M390 530h3v1h-3zM391 529h1v3h-1z" fill="#ffffff"/>
<path d="M398 515h3v1h-3zM399 514h1v3h-1z" fill="#ffffff"/>
<path d="M406 503h3v1h-3zM407 502h1v3h-1z" fill="#ffffff"/>
<path d="M414 493h3v1h-3zM415 492h1v3h-1z" fill="#ffffff"/>
<path d="M422 484h3v1h-3zM423 483h1v3h-1z" fill="#ffffff"/>
<path d="M430 475h3v1h-3zM431 474h1v3h-1z" fill="#ffffff"/>
<path d="M438 462h3v1h-3zM439 461h1v3h-1z" fill="#ffffff"/>
<path d="M446 444h3v1h-3zM447 443h1v3h-1z" fill="#ffffff"/>
<path d="M454 427h3v1h-3zM455 426h1v3h-1z" fill="#ffffff"/>
<path d="M462 356h3v1h-3zM463 355h1v3h-1z" fill="#ffffff"/>
<path d="M470 341h3v1h-3zM471 340h1v3h-1z" fill="#ffffff"/>
<path d="M478 341h3v1h-3zM479 340h1v3h-1z" fill="#ffffff"/>
<path d="M486 351h3v1h-3zM487 350h1v3h-1z" fill="#ffffff"/>
<path d="M494 360h3v1h-3zM495 359h1v3h-1z" fill="#ffffff"/>
<path d="M502 509h3v1h-3zM503 508h1v3h-1z" fill="#ffffff"/>
<path d="M510 506h3v1h-3zM511 505h1v3h-1z" fill="#ffffff"/>
<path d="M518 497h3v1h-3zM519 496h1v3h-1z" fill="#ffffff"/>
<path d="M526 484h3v1h-3zM527 483h1v3h-1z" fill="#ffffff"/>
<path d="M534 471h3v1h-3zM535 470h1v3h-1z" fill="#ffffff"/>
<path d="M542 450h3v1h-3zM543 449h1v3h-1z" fill="#ffffff"/>
<path d="M550 423h3v1h-3zM551 422h1v3h-1z" fill="#ffffff"/>
<path d="M558 388h3v1h-3zM559 387h1v3h-1z" fill="#ffffff"/>
<path d="M566 345h3v1h-3zM567 344h1v3h-1z" fill="#ffffff"/>
<path d="M574 307h3v1h-3zM575 306h1v3h-1z" fill="#ffffff"/>
<path d="M582 274h3v1h-3zM583 273h1v3h-1z" fill="#ffffff"/>
<path d="M590 263h3v1h-3zM591 262h1v3h-1z" fill="#ffffff"/>
<path d="M598 263h3v1h-3zM599 262h1v3h-1z" fill="#ffffff"/>
<path d="M606 75h3v1h-3zM607 74h1v3h-1z" fill="#ffffff"/>
<path d="M614 79h3v1h-3zM615 78h1v3h-1z" fill="#ffffff"/>
<path d="M622 88h3v1h-3zM623 87h1v3h-1z" fill="#ffffff"/>
<path d="M630 97h3v1h-3zM631 96h1v3h-1z" fill="#ffffff"/>
<path d="M638 106h3v1h-3zM639 105h1v3h-1z" fill="#ffffff"/>
<path d="M646 114h3v1h-3zM647 113h1v3h-1z" fill="#ffffff"/>
<path d="M654 122h3v1h-3zM655 121h1v3h-1z" fill="#ffffff"/>
<path d="M662 127h3v1h-3zM663 126h1v3h-1z" fill="#ffffff"/>
<path d="M670 135h3v1h-3zM671 134h1v3h-1z" fill="#ffffff"/>
<path d="M678 142h3v1h-3zM679 141h1v3h-1z" fill="#ffffff"/>
<path d="M686 149h3v1h-3zM687 148h1v3h-1z" fill="#ffffff"/>
<path d="M694 160h3v1h-3zM695 159h1v3h-1z" fill="#ffffff"/>
<path d="M702 178h3v1h-3zM703 177h1v3h-1z" fill="#ffffff"/>
<path d="M710 194h3v1h-3zM711 193h1v3h-1z" fill="#ffffff"/>
<path d="M718 208h3v1h-3zM719 207h1v3h-1z" fill="#ffffff"/>
<path d="M726 378h3v1h-3zM727 377h1v3h-1z" fill="#ffffff"/>
<path d="M734 375h3v1h-3zM735 374h1v3h-1z" fill="#ffffff"/>
<path d="M742 368h3v1h-3zM743 367h1v3h-1z" fill="#ffffff"/>
<path d="M750 357h3v1h-3zM751 356h1v3h-1z" fill="#ffffff"/>
<path d="M758 346h3v1h-3zM759 345h1v3h-1z" fill="#ffffff"/>
<path d="M766 336h3v1h-3zM767 335h1v3h-1z" fill="#ffffff"/>
<path d="M774 327h3v1h-3zM775 326h1v3h-1z" fill="#ffffff"/>
<path d="M782 318h3v1h-3zM783 317h1v3h-1z" fill="#ffffff"/>
<path d="M790 310h3v1h-3zM791 309h1v3h-1z" fill="#ffffff"/>
<path d="M798 299h3v1h-3zM799 298h1v3h-1z" fill="#ffffff"/>
<path d="M806 285h3v1h-3zM807 284h1v3h-1z" fill="#ffffff"/>
<path d="M814 273h3v1h-3zM815 272h1v3h-1z" fill="#ffffff"/>
<path d="M822 258h3v1h-3zM823 257h1v3h-1z" fill="#ffffff"/>
<path d="M830 246h3v1h-3zM831 245h1v3h-1z" fill="#ffffff"/>
<path d="M838 240h3v1h-3zM839 239h1v3h-1z" fill="#ffffff"/>
<path d="M846 240h3v1h-3zM847 239h1v3h-1z" fill="#ffffff"/>
<path d="M854 233h3v1h-3zM855 232h1v3h-1z" fill="#ffffff"/>
<path d="M862 224h3v1h-3zM863 223h1v3h-1z" fill="#ffffff"/>
<path d="M870 209h3v1h-3zM871 208h1v3h-1z" fill="#ffffff"/>
<path d="M878 194h3v1h-3zM879 193h1v3h-1z" fill="#ffffff"/>
<path d="M886 114h3v1h-3zM887 113h1v3h-1z" fill="#ffffff"/>
<path d="M894 116h3v1h-3zM895 115h1v3h-1z" fill="#ffffff"/>
<path d="M902 119h3v1h-3zM903 118h1v3h-1z" fill="#ffffff"/>
<path d="M910 124h3v1h-3zM911 123h1v3h-1z" fill="#ffffff"/>
<path d="M918 129h3v1h-3zM919 128h1v3h-1z" fill="#ffffff"/>
<path d="M926 137h3v1h-3zM927 136h1v3h-1z" fill="#ffffff"/>
<path d="M934 145h3v1h-3zM935 144h1v3h-1z" fill="#ffffff"/>
<path d="M942 153h3v1h-3zM943 152h1v3h-1z" fill="#ffffff"/>
<path d="M950 165h3v1h-3zM951 164h1v3h-1z" fill="#ffffff"/>
<path d="M958 178h3v1h-3zM959 177h1v3h-1z" fill="#ffffff"/>
<path d="M966 278h3v1h-3zM967 277h1v3h-1z" fill="#ffffff"/>
<path d="M974 276h3v1h-3zM975 275h1v3h-1z" fill="#ffffff"/>
<path d="M982 272h3v1h-3zM983 271h1v3h-1z" fill="#ffffff"/>
<path d="M990 269h3v1h-3zM991 268h1v3h-1z" fill="#ffffff"/>
<path d="M998 265h3v1h-3zM999 264h1v3h-1z" fill="#ffffff"/>
<path d="M1006 261h3v1h-3zM1007 260h1v3h-1z" fill="#ffffff"/>
<path d="M1014 259h3v1h-3zM1015 258h1v3h-1z" fill="#ffffff"/>
<path d="M1022 256h3v1h-3zM1023 255h1v3h-1z" fill="#ffffff"/>
<path d="M1030 251h3v1h-3zM1031 250h1v3h-1z" fill="#ffffff"/>
<path d="M1038 245h3v1h-3zM1039 244h1v3h-1z" fill="#ffffff"/>
<path d="M1046 239h3v1h-3zM1047 238h1v3h-1z" fill="#ffffff"/>
<path d="M1054 233h3v1h-3zM1055 232h1v3h-1z" fill="#ffffff"/>
<path d="M1062 227h3v1h-3zM1063 226h1v3h-1z" fill="#ffffff"/>
<path d="M1070 227h3v1h-3zM1071 226h1v3h-1z" fill="#ffffff"/>
<path d="M1078 218h3v1h-3zM1079 217h1v3h-1z" fill="#ffffff"/>
<path d="M1086 206h3v1h-3zM1087 205h1v3h-1z" fill="#ffffff"/>
<path d="M1094 124h3v1h-3zM1095 123h1v3h-1z" fill="#ffffff"/>
<path d="M1102 124h3v1h-3zM1103 123h1v3h-1z" fill="#ffffff"/>
<path d="M1110 128h3v1h-3zM1111 127h1v3h-1z" fill="#ffffff"/>
<path d="M1118 134h3v1h-3zM1119 133h1v3h-1z" fill="#ffffff"/>
<path d="M1126 140h3v1h-3zM1127 139h1v3h-1z" fill="#ffffff"/>
<path d="M1134 150h3v1h-3zM1135 149h1v3h-1z" fill="#ffffff"/>
<path d="M1142 158h3v1h-3zM1143 157h1v3h-1z" fill="#ffffff"/>
<path d="M1150 167h3v1h-3zM1151 166h1v3h-1z" fill="#ffffff"/>
<path d="M1158 260h3v1h-3zM1159 259h1v3h-1z" fill="#ffffff"/>
<path d="M1166 259h3v1h-3zM1167 258h1v3h-1z" fill="#ffffff"/>
<path d="M1174 257h3v1h-3zM1175 256h1v3h-1z" fill="#ffffff"/>
<path d="M1182 252h3v1h-3zM1183 251h1v3h-1z" fill="#ffffff"/>
<path d="M1190 246h3v1h-3zM1191 245h1v3h-1z" fill="#ffffff"/>
<path d="M1198 239h3v1h-3zM1199 238h1v3h-1z" fill="#ffffff"/>
<path d="M1206 235h3v1h-3zM1207 234h1v3h-1z" fill="#ffffff"/>
<path d="M1214 230h3v1h-3zM1215 229h1v3h-1z" fill="#ffffff"/>
<path d="M1222 225h3v1h-3zM1223 224h1v3h-1z" fill="#ffffff"/>
<path d="M1230 220h3v1h-3zM1231 219h1v3h-1z" fill="#ffffff"/>
<path d="M1238 148h3v1h-3zM1239 147h1v3h-1z" fill="#ffffff"/>
<path d="M1246 150h3v1h-3zM1247 149h1v3h-1z" fill="#ffffff"/>
<rect x="213.5" y="70.5" width="48" height="16" fill="none" stroke="#ffa500" stroke-width="1"/>
<text x="215.5" y="83.5" font-size="12" fill="#ffa500" textLength="45" lengthAdjust="spacingAndGlyphs">3496.43</text>
<rect x="213.5" y="234.5" width="48" height="16" fill="none" stroke="#ffa500" stroke-width="1"/>
<text x="215.5" y="247.5" font-size="12" fill="#ffa500" textLength="45" lengthAdjust="spacingAndGlyphs">3291.14</text>
<rect x="213.5" y="337.5" width="48" height="16" fill="none" stroke="#ffa500" stroke-width="1"/>
<text x="215.5" y="350.5" font-size="12" fill="#ffa500" textLength="45" lengthAdjust="spacingAndGlyphs">3162.65</text>
<rect x="421.5" y="170.5" width="48" height="16" fill="none" stroke="#00ffff" stroke-width="1"/>
<text x="423.5" y="183.5" font-size="12" fill="#00ffff" textLength="45" lengthAdjust="spacingAndGlyphs">3371.78</text>
<rect x="421.5" y="233.5" width="48" height="16" fill="none" stroke="#00ffff" stroke-width="1"/>
<text x="423.5" y="246.5" font-size="12" fill="#00ffff" textLength="45" lengthAdjust="spacingAndGlyphs">3292.17</text>
<rect x="421.5" y="284.5" width="48" height="16" fill="none" stroke="#00ffff" stroke-width="1"/>
<text x="423.5" y="297.5" font-size="12" fill="#00ffff" textLength="45" lengthAdjust="spacingAndGlyphs">3228.29</text>
<rect x="1248" y="114" width="10" height="1" fill="#ff0000"/>
<rect x="1248" y="124" width="10" height="1" fill="#ffff00"/>
<rect x="1248" y="148" width="10" height="1" fill="#c71585"/>
<rect x="1248" y="175" width="10" height="1" fill="#d2691e"/>
<rect x="1248" y="261" width="10" height="1" fill="#ffff00"/>
<rect x="1248" y="278" width="10" height="1" fill="#ff0000"/>
<rect x="1258.5" y="116.5" width="47" height="16" fill="none" stroke="#ffff00" stroke-width="1"/>
<text x="1260.5" y="129.5" font-size="12" fill="#ffff00" textLength="45" lengthAdjust="spacingAndGlyphs">3438.92</text>
<rect x="1258.5" y="106.5" width="47" height="16" fill="none" stroke="#ff0000" stroke-width="1"/>
<text x="1260.5" y="119.5" font-size="12" fill="#ff0000" textLength="45" lengthAdjust="spacingAndGlyphs">3451.32</text>
<rect x="1258.5" y="140.5" width="47" height="16" fill="none" stroke="#c71585" stroke-width="1"/>
<text x="1260.5" y="153.5" font-size="12" fill="#c71585" textLength="45" lengthAdjust="spacingAndGlyphs">3408.51</text>
<rect x="1258.5" y="167.5" width="47" height="16" fill="none" stroke="#d2691e" stroke-width="1"/>
<text x="1260.5" y="180.5" font-size="12" fill="#d2691e" textLength="45" lengthAdjust="spacingAndGlyphs">3374.66</text>
<rect x="1298.5" y="180.5" width="47" height="16" fill="none" stroke="#ffffff" stroke-width="1"/>
<text x="1300.5" y="193.5" font-size="12" fill="#ffffff" textLength="45" lengthAdjust="spacingAndGlyphs">3359.09</text>
<rect x="1314.5" y="188.5" width="47" height="16" fill="none" stroke="#ffffff" stroke-width="1"/>
<text x="1316.5" y="201.5" font-size="12" fill="#ffffff" textLength="45" lengthAdjust="spacingAndGlyphs">3349.09</text>
<rect x="1282.5" y="202.5" width="47" height="16" fill="none" stroke="#ffffff" stroke-width="1"/>
<text x="1284.5" y="215.5" font-size="12" fill="#ffffff" textLength="45" lengthAdjust="spacingAndGlyphs">3331.10</text>
<rect x="1258.5" y="218.5" width="47" height="16" fill="none" stroke="#c71585" stroke-width="1"/>
<text x="1260.5" y="231.5" font-size="12" fill="#c71585" textLength="45" lengthAdjust="spacingAndGlyphs">3311.38</text>
<rect x="1258.5" y="253.5" width="47" height="16" fill="none" stroke="#ffff00" stroke-width="1"/>
<text x="1260.5" y="266.5" font-size="12" fill="#ffff00" textLength="45" lengthAdjust="spacingAndGlyphs">3267.77</text>
<rect x="1258.5" y="270.5" width="47" height="16" fill="none" stroke="#ff0000" stroke-width="1"/>
<text x="1260.5" y="283.5" font-size="12" fill="#ff0000" textLength="45" lengthAdjust="spacingAndGlyphs">3246.04</text>
<text x="1260" y="73" font-size="12" fill="#40e0d0" textLength="17" lengthAdjust="spacingAndGlyphs">0.0</text>
<text x="1253" y="176.5" font-size="12" fill="#40e0d0" textLength="24" lengthAdjust="spacingAndGlyphs">23.6</text>
<text x="1253" y="239" font-size="12" fill="#40e0d0" textLength="24" lengthAdjust="spacingAndGlyphs">38.2</text>
<text x="1253" y="289.5" font-size="12" fill="#40e0d0" textLength="24" lengthAdjust="spacingAndGlyphs">50.0</text>
<text x="1253" y="341.5" font-size="12" fill="#40e0d0" textLength="24.5" lengthAdjust="spacingAndGlyphs">61.8</text>
<text x="1246" y="508" font-size="12" fill="#40e0d0" textLength="31.5" lengthAdjust="spacingAndGlyphs">100.0</text>
<text x="1578" y="75" font-size="12" fill="#ffa500" text-anchor="end">FE 161.8</text>
<text x="1578" y="126" font-size="12" fill="#00ff7f" text-anchor="end">FE 161.8</text>
<text x="1578" y="240" font-size="12" fill="#ffa500" text-anchor="end">FE 100.0</text>
<text x="1578" y="309" font-size="12" fill="#00ff7f" text-anchor="end">FE 100.0</text>
<text x="1578" y="342" font-size="12" fill="#ffa500" text-anchor="end">FE 61.8</text>
<text x="1578" y="423" font-size="12" fill="#00ff7f" text-anchor="end">FE 61.8</text>
<path d="M1253.5 41 L1265.5 41 L1259.5 47.5 Z" fill="#8c96a0"/>
<path d="M0 48 L4 48 L1 51 Z" fill="#ffffff"/>
<text x="8.8" y="54.7" font-size="11" fill="#ffffff" textLength="74" lengthAdjust="spacingAndGlyphs">XAUUSD,Daily</text>
<text x="91.7" y="54.7" font-size="11" fill="#ffffff" textLength="194" lengthAdjust="spacingAndGlyphs">3316.16 3318.44 3311.39 3318.01</text>
<text x="-3" y="67.8" font-size="11" fill="#ff0000">4</text>
<text x="2.4" y="67.8" font-size="11" fill="#ffffff" textLength="127" lengthAdjust="spacingAndGlyphs">_Level_ZZ_Semafor_Ex</text>
<text x="134" y="67.8" font-size="12.5" fill="#ffffff" textLength="52.5" lengthAdjust="spacingAndGlyphs">提示信息:</text>
<text x="-5.5" y="79.5" font-size="11" fill="#ffffff" textLength="63" lengthAdjust="spacingAndGlyphs">High Level4</text>
<text x="62.5" y="79.5" font-size="11" fill="#ffffff" textLength="7" lengthAdjust="spacingAndGlyphs">=</text>
<text x="75" y="79.5" font-size="11" fill="#ffffff" textLength="45.4" lengthAdjust="spacingAndGlyphs">3451.32</text>
<text x="-5.5" y="91.6" font-size="11" fill="#ffffff" textLength="63" lengthAdjust="spacingAndGlyphs">High Level3</text>
<text x="62.5" y="91.6" font-size="11" fill="#ffffff" textLength="7" lengthAdjust="spacingAndGlyphs">=</text>
<text x="75" y="91.6" font-size="11" fill="#ffffff" textLength="45.4" lengthAdjust="spacingAndGlyphs">3438.92</text>
<text x="-5.5" y="103.7" font-size="11" fill="#ffffff" textLength="63" lengthAdjust="spacingAndGlyphs">High Level2</text>
<text x="62.5" y="103.7" font-size="11" fill="#ffffff" textLength="7" lengthAdjust="spacingAndGlyphs">=</text>
<text x="75" y="103.7" font-size="11" fill="#ffffff" textLength="45.4" lengthAdjust="spacingAndGlyphs">3408.51</text>
<text x="-5.5" y="115.8" font-size="11" fill="#ffffff" textLength="63" lengthAdjust="spacingAndGlyphs">High Level1</text>
<text x="62.5" y="115.8" font-size="11" fill="#ffffff" textLength="7" lengthAdjust="spacingAndGlyphs">=</text>
<text x="75" y="115.8" font-size="11" fill="#ffffff" textLength="45.4" lengthAdjust="spacingAndGlyphs">3374.66</text>
<text x="-4.5" y="140.0" font-size="11" fill="#ffffff" textLength="61" lengthAdjust="spacingAndGlyphs">Low Level1</text>
<text x="62" y="140.0" font-size="11" fill="#ffffff" textLength="7" lengthAdjust="spacingAndGlyphs">=</text>
<text x="74.2" y="140.0" font-size="11" fill="#ffffff" textLength="45.4" lengthAdjust="spacingAndGlyphs">3311.38</text>
<text x="-4.5" y="152.1" font-size="11" fill="#ffffff" textLength="61" lengthAdjust="spacingAndGlyphs">Low Level2</text>
<text x="62" y="152.1" font-size="11" fill="#ffffff" textLength="7" lengthAdjust="spacingAndGlyphs">=</text>
<text x="74.2" y="152.1" font-size="11" fill="#ffffff" textLength="45.4" lengthAdjust="spacingAndGlyphs">3311.31</text>
<text x="-4.5" y="164.20000000000002" font-size="11" fill="#ffffff" textLength="61" lengthAdjust="spacingAndGlyphs">Low Level3</text>
<text x="62" y="164.20000000000002" font-size="11" fill="#ffffff" textLength="7" lengthAdjust="spacingAndGlyphs">=</text>
<text x="74.2" y="164.20000000000002" font-size="11" fill="#ffffff" textLength="45.4" lengthAdjust="spacingAndGlyphs">3267.77</text>
<text x="-4.5" y="176.29999999999998" font-size="11" fill="#ffffff" textLength="61" lengthAdjust="spacingAndGlyphs">Low Level4</text>
<text x="62" y="176.29999999999998" font-size="11" fill="#ffffff" textLength="7" lengthAdjust="spacingAndGlyphs">=</text>
<text x="74.2" y="176.29999999999998" font-size="11" fill="#ffffff" textLength="45.4" lengthAdjust="spacingAndGlyphs">3246.04</text>
<rect x="0" y="40" width="1580" height="1" fill="#ffffff"/>
<rect x="1579" y="40" width="1" height="727" fill="#ffffff"/>
<rect x="0" y="766" width="1580" height="1" fill="#ffffff"/>
<rect x="1580" y="61" width="3" height="1" fill="#ffffff"/>
<text x="1586.4" y="65.6" font-size="12" fill="#ffffff" textLength="44.6" lengthAdjust="spacingAndGlyphs">3517.50</text>
<rect x="1580" y="110" width="3" height="1" fill="#ffffff"/>
<text x="1586.4" y="114.6" font-size="12" fill="#ffffff" textLength="44.6" lengthAdjust="spacingAndGlyphs">3456.30</text>
<rect x="1580" y="159" width="3" height="1" fill="#ffffff"/>
<text x="1586.4" y="163.6" font-size="12" fill="#ffffff" textLength="44.6" lengthAdjust="spacingAndGlyphs">3395.10</text>
<rect x="1580" y="208" width="3" height="1" fill="#ffffff"/>
<text x="1586.4" y="212.6" font-size="12" fill="#ffffff" textLength="44.6" lengthAdjust="spacingAndGlyphs">3333.90</text>
<rect x="1580" y="257" width="3" height="1" fill="#ffffff"/>
<text x="1586.4" y="261.6" font-size="12" fill="#ffffff" textLength="44.6" lengthAdjust="spacingAndGlyphs">3272.70</text>
<rect x="1580" y="306" width="3" height="1" fill="#ffffff"/>
<text x="1586.4" y="310.6" font-size="12" fill="#ffffff" textLength="44.6" lengthAdjust="spacingAndGlyphs">3210.30</text>
<rect x="1580" y="355" width="3" height="1" fill="#ffffff"/>
<text x="1586.4" y="359.6" font-size="12" fill="#ffffff" textLength="44.6" lengthAdjust="spacingAndGlyphs">3149.10</text>
<rect x="1580" y="404" width="3" height="1" fill="#ffffff"/>
<text x="1586.4" y="408.6" font-size="12" fill="#ffffff" textLength="44.6" lengthAdjust="spacingAndGlyphs">3087.90</text>
<rect x="1580" y="453" width="3" height="1" fill="#ffffff"/>
<text x="1586.4" y="457.6" font-size="12" fill="#ffffff" textLength="44.6" lengthAdjust="spacingAndGlyphs">3026.70</text>
<rect x="1580" y="502" width="3" height="1" fill="#ffffff"/>
<text x="1586.4" y="506.6" font-size="12" fill="#ffffff" textLength="44.6" lengthAdjust="spacingAndGlyphs">2965.50</text>
<rect x="1580" y="551" width="3" height="1" fill="#ffffff"/>
<text x="1586.4" y="555.6" font-size="12" fill="#ffffff" textLength="44.6" lengthAdjust="spacingAndGlyphs">2904.30</text>
<rect x="1580" y="600" width="3" height="1" fill="#ffffff"/>
<text x="1586.4" y="604.6" font-size="12" fill="#ffffff" textLength="44.6" lengthAdjust="spacingAndGlyphs">2843.10</text>
<rect x="1580" y="649" width="3" height="1" fill="#ffffff"/>
<text x="1586.4" y="653.6" font-size="12" fill="#ffffff" textLength="44.6" lengthAdjust="spacingAndGlyphs">2781.90</text>
<rect x="1580" y="698" width="3" height="1" fill="#ffffff"/>
<text x="1586.4" y="702.6" font-size="12" fill="#ffffff" textLength="44.6" lengthAdjust="spacingAndGlyphs">2719.50</text>
<rect x="1580" y="747" width="3" height="1" fill="#ffffff"/>
<text x="1586.4" y="751.6" font-size="12" fill="#ffffff" textLength="44.6" lengthAdjust="spacingAndGlyphs">2658.30</text>
<rect x="1581" y="213" width="54" height="14" fill="#ffffff"/>
<text x="1586.4" y="224.6" font-size="12" fill="#000000" textLength="44.6" lengthAdjust="spacingAndGlyphs">3318.01</text>
<rect x="1581" y="256" width="54" height="14" fill="#ff00ff"/>
<text x="1586.4" y="267.3" font-size="12" fill="#000000" textLength="44.6" lengthAdjust="spacingAndGlyphs">3266.04</text>
<rect x="1581" y="634" width="54" height="14" fill="#ffffff"/>
<text x="1586.4" y="645.6" font-size="12" fill="#000000" textLength="44.6" lengthAdjust="spacingAndGlyphs">2792.42</text>
<rect x="-9" y="766" width="1" height="4" fill="#ffffff"/>
<text x="-9.5" y="782" font-size="12.25" fill="#ffffff">10 Jan 2025</text>
<rect x="87" y="766" width="1" height="4" fill="#ffffff"/>
<text x="86.5" y="782" font-size="12.25" fill="#ffffff">28 Jan 2025</text>
<rect x="183" y="766" width="1" height="4" fill="#ffffff"/>
<text x="182.5" y="782" font-size="12.25" fill="#ffffff">13 Feb 2025</text>
<rect x="279" y="766" width="1" height="4" fill="#ffffff"/>
<text x="278.5" y="782" font-size="12.25" fill="#ffffff">3 Mar 2025</text>
<rect x="375" y="766" width="1" height="4" fill="#ffffff"/>
<text x="374.5" y="782" font-size="12.25" fill="#ffffff">19 Mar 2025</text>
<rect x="471" y="766" width="1" height="4" fill="#ffffff"/>
<text x="470.5" y="782" font-size="12.25" fill="#ffffff">4 Apr 2025</text>
<rect x="567" y="766" width="1" height="4" fill="#ffffff"/>
<text x="566.5" y="782" font-size="12.25" fill="#ffffff">23 Apr 2025</text>
<rect x="663" y="766" width="1" height="4" fill="#ffffff"/>
<text x="662.5" y="782" font-size="12.25" fill="#ffffff">9 May 2025</text>
<rect x="759" y="766" width="1" height="4" fill="#ffffff"/>
<text x="758.5" y="782" font-size="12.25" fill="#ffffff">27 May 2025</text>
<rect x="855" y="766" width="1" height="4" fill="#ffffff"/>
<text x="854.5" y="782" font-size="12.25" fill="#ffffff">12 Jun 2025</text>
<rect x="951" y="766" width="1" height="4" fill="#ffffff"/>
<text x="950.5" y="782" font-size="12.25" fill="#ffffff">30 Jun 2025</text>
<rect x="1047" y="766" width="1" height="4" fill="#ffffff"/>
<text x="1046.5" y="782" font-size="12.25" fill="#ffffff">16 Jul 2025</text>
<rect x="1143" y="766" width="1" height="4" fill="#ffffff"/>
<text x="1142.5" y="782" font-size="12.25" fill="#ffffff">1 Aug 2025</text>
<rect x="1239" y="766" width="1" height="4" fill="#ffffff"/>
<text x="1238.5" y="782" font-size="12.25" fill="#ffffff">19 Aug 2025</text>
<rect x="0" y="790" width="1635" height="2" fill="#ffffff"/>
<rect x="0" y="792" width="1635" height="1" fill="#000000"/>
<rect x="0" y="793" width="1635" height="21" fill="#f0f0f0"/>
<rect x="869" y="792" width="128" height="22" fill="#ffffff"/>
<rect x="869" y="793" width="1" height="21" fill="#a0a0a0"/><rect x="996" y="793" width="1" height="21" fill="#a0a0a0"/>
<rect x="109" y="795" width="1" height="19" fill="#8a8a8a"/>
<rect x="273" y="795" width="1" height="19" fill="#8a8a8a"/>
<rect x="401" y="795" width="1" height="19" fill="#8a8a8a"/>
<rect x="565" y="795" width="1" height="19" fill="#8a8a8a"/>
<rect x="720" y="795" width="1" height="19" fill="#8a8a8a"/>
<rect x="1113" y="795" width="1" height="19" fill="#8a8a8a"/>
<rect x="1229" y="795" width="1" height="19" fill="#8a8a8a"/>
<rect x="1345" y="795" width="1" height="19" fill="#8a8a8a"/>
<rect x="1509" y="795" width="1" height="19" fill="#8a8a8a"/>
<text x="7.5" y="809.8" font-size="15" fill="#6a6a6a" textLength="87.5" lengthAdjust="spacingAndGlyphs">XAUUSD,H4</text>
<text x="122.9" y="809.8" font-size="15" fill="#6a6a6a" textLength="136.4" lengthAdjust="spacingAndGlyphs">USOIL.OCT25,Daily</text>
<text x="285.9" y="809.8" font-size="15" fill="#6a6a6a" textLength="101.8" lengthAdjust="spacingAndGlyphs">XAUUSD,Daily</text>
<text x="415.2" y="809.8" font-size="15" fill="#6a6a6a" textLength="135.5" lengthAdjust="spacingAndGlyphs">USOIL.OCT25,Daily</text>
<text x="579.2" y="809.8" font-size="15" fill="#6a6a6a" textLength="127.9" lengthAdjust="spacingAndGlyphs">XAUUSD,Monthly</text>
<text x="734.7" y="809.8" font-size="15" fill="#6a6a6a" textLength="120.3" lengthAdjust="spacingAndGlyphs">XAUUSD,Weekly</text>
<text x="881.7" y="809.8" font-size="15" fill="#000000" textLength="102.3" lengthAdjust="spacingAndGlyphs">XAUUSD,Daily</text>
<text x="1010.6" y="809.8" font-size="15" fill="#6a6a6a" textLength="88.7" lengthAdjust="spacingAndGlyphs">XAUUSD,H4</text>
<text x="1127" y="809.8" font-size="15" fill="#6a6a6a" textLength="87.8" lengthAdjust="spacingAndGlyphs">XAUUSD,H1</text>
<text x="1242.8" y="809.8" font-size="15" fill="#6a6a6a" textLength="88.7" lengthAdjust="spacingAndGlyphs">XAUUSD,H4</text>
<text x="1359.5" y="809.8" font-size="15" fill="#6a6a6a" textLength="136" lengthAdjust="spacingAndGlyphs">USOIL.OCT25,Daily</text>
<text x="1521.9" y="809.8" font-size="15" fill="#6a6a6a">XAUUSD,H4</text>
<rect x="1597" y="793" width="38" height="21" fill="#f0f0f0"/>
<path d="M1606 799v8l-4-4z" fill="#b0b0b0"/><path d="M1625 799v8l4-4z" fill="#000"/>
<path d="M0 802c4 4 8 8 11 12h-11z" fill="#4a6a4c"/>
<path d="M1635 802c-4 4-8 8-11 12h11z" fill="#4a6a4c"/>
</svg>
</body></html>
